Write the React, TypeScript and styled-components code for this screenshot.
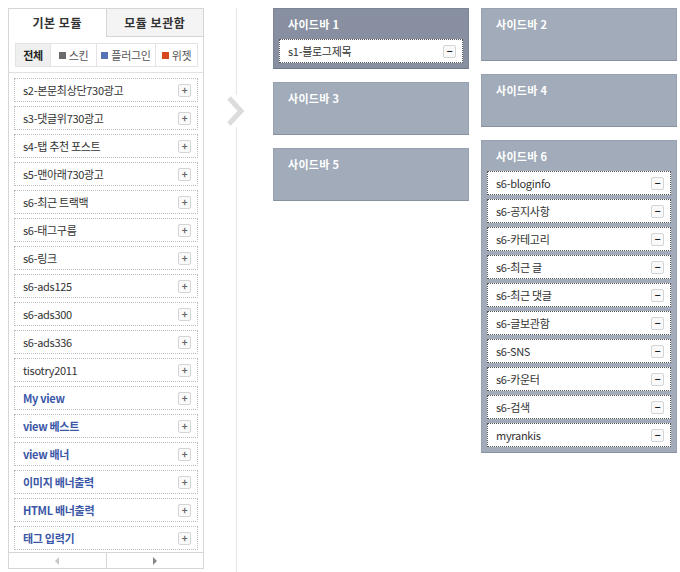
import { FC } from "react";
import styled, { createGlobalStyle } from "styled-components";

const GlobalStyle = createGlobalStyle`
  html, body {
    margin: 0;
    padding: 0;
    background: #fff;
  }
  body {
    font-family: "Noto Sans CJK KR", "Noto Sans", "Liberation Sans", sans-serif;
    font-size: 11px;
    color: #333;
  }
  * {
    box-sizing: border-box;
  }
`;

const Page = styled.div`
  display: flex;
  width: 680px;
  height: 572px;
  padding: 8px 0 0 8px;
  overflow: hidden;
`;

/* ---------- left: module list ---------- */

const ModulePanel = styled.div`
  display: flex;
  flex-direction: column;
  width: 196px;
  height: 561px;
  border: 1px solid #d6d6d6;
  background: #fff;
`;

const Tabs = styled.div`
  display: flex;
  height: 28px;
`;

const Tab = styled.div<{ active?: boolean }>`
  flex: 1;
  display: flex;
  justify-content: center;
  align-items: center;
  font-size: 12px;
  font-weight: 700;
  color: #333;
  letter-spacing: 0.5px;
  background: ${({ active }) => (active ? "#fff" : "#f4f4f4")};
  border-bottom: 1px solid ${({ active }) => (active ? "transparent" : "#d6d6d6")};
  border-left: ${({ active }) => (active ? "none" : "1px solid #d6d6d6")};
`;

const FilterWrap = styled.div`
  padding: 6px 5px 5px 6px;
  border-bottom: 1px solid #e2e2e2;
`;

const Filter = styled.div`
  display: flex;
  height: 24px;
  border: 1px solid #e3e3e3;
`;

const FilterItem = styled.div<{ active?: boolean; w: number }>`
  display: flex;
  align-items: center;
  justify-content: center;
  gap: 3px;
  width: ${({ w }) => w}px;
  flex: ${({ w }) => (w ? "none" : "1")};
  font-size: 11px;
  letter-spacing: -0.3px;
  font-weight: ${({ active }) => (active ? 700 : 400)};
  color: ${({ active }) => (active ? "#222" : "#555")};
  background: ${({ active }) => (active ? "#efefef" : "#fff")};
  border-left: 1px solid #e3e3e3;

  &:first-child {
    border-left: none;
  }
`;

const Swatch = styled.span<{ color: string }>`
  display: inline-block;
  width: 7px;
  height: 7px;
  background: ${({ color }) => color};
`;

const ModuleList = styled.div`
  flex: 1;
  display: flex;
  flex-direction: column;
  gap: 4px;
  padding: 5px 5px 0 5px;
  overflow: hidden;
`;

const ModuleItem = styled.div<{ blue?: boolean }>`
  flex: none;
  display: flex;
  align-items: center;
  justify-content: space-between;
  height: 24px;
  padding: 0 6px 0 8px;
  border: 1px dotted #bdbdbd;
  background: #fff;
  font-size: 11px;
  font-weight: ${({ blue }) => (blue ? 700 : 400)};
  color: ${({ blue }) => (blue ? "#3a56a6" : "#333")};
  letter-spacing: -0.3px;
`;

const SmallButton = styled.span<{ dark?: boolean }>`
  display: flex;
  align-items: center;
  justify-content: center;
  width: 13px;
  height: 13px;
  border: 1px solid #d4d4d4;
  border-radius: 2px;
  background: #fafafa;
  color: ${({ dark }) => (dark ? "#222" : "#666")};
  font-size: 10px;
  font-weight: 700;
  line-height: 1;
`;

const Pager = styled.div`
  display: flex;
  height: 16px;
  margin-top: 2px;
  border-top: 1px solid #d6d6d6;
`;

const PagerButton = styled.div`
  flex: 1;
  display: flex;
  align-items: center;
  justify-content: center;
  border-left: 1px solid #d6d6d6;

  &:first-child {
    border-left: none;
  }
`;

/* ---------- middle divider ---------- */

const Divider = styled.div`
  position: relative;
  width: 69px;
  flex: none;

  &::before {
    content: "";
    position: absolute;
    left: 32px;
    top: 0;
    bottom: 0;
    width: 1px;
    background: #e6e6e6;
  }
`;

const Chevron = styled.svg`
  position: absolute;
  left: 21px;
  top: 87px;
`;

/* ---------- right: sidebars ---------- */

const Sidebars = styled.div`
  display: grid;
  grid-template-columns: 196px 196px;
  column-gap: 12px;
  align-items: start;
`;

const Column = styled.div`
  display: flex;
  flex-direction: column;
  gap: 13px;
`;

const SidebarBox = styled.div<{ active?: boolean }>`
  display: flex;
  flex-direction: column;
  gap: 4px;
  min-height: 53px;
  padding: 0 5px 5px 5px;
  background: ${({ active }) => (active ? "#878fa0" : "#a1abba")};
  border: 1px solid ${({ active }) => (active ? "#7c8596" : "#97a1b1")};
  border-bottom-color: ${({ active }) => (active ? "#6f7889" : "#88919f")};
`;

const SidebarTitle = styled.div`
  height: 26px;
  display: flex;
  align-items: center;
  padding: 4px 0 0 9px;
  font-size: 11px;
  font-weight: 700;
  color: #fff;
  letter-spacing: 0.3px;
`;

const SidebarItem = styled.div`
  display: flex;
  align-items: center;
  justify-content: space-between;
  height: 24px;
  padding: 0 6px 0 8px;
  background: #fff;
  border: 1px dotted #555;
  font-size: 11px;
  color: #333;
  letter-spacing: -0.3px;
`;

interface ModuleDef {
  name: string;
  blue?: boolean;
}

const modules: ModuleDef[] = [
  { name: "s2-본문최상단730광고" },
  { name: "s3-댓글위730광고" },
  { name: "s4-탭 추천 포스트" },
  { name: "s5-맨아래730광고" },
  { name: "s6-최근 트랙백" },
  { name: "s6-태그구름" },
  { name: "s6-링크" },
  { name: "s6-ads125" },
  { name: "s6-ads300" },
  { name: "s6-ads336" },
  { name: "tisotry2011" },
  { name: "My view", blue: true },
  { name: "view 베스트", blue: true },
  { name: "view 배너", blue: true },
  { name: "이미지 배너출력", blue: true },
  { name: "HTML 배너출력", blue: true },
  { name: "태그 입력기", blue: true },
];

const sidebar6 = [
  "s6-bloginfo",
  "s6-공지사항",
  "s6-카테고리",
  "s6-최근 글",
  "s6-최근 댓글",
  "s6-글보관함",
  "s6-SNS",
  "s6-카운터",
  "s6-검색",
  "myrankis",
];

const Sidebar: FC<{ title: string; items?: string[]; active?: boolean }> = ({
  title,
  items = [],
  active,
}) => (
  <SidebarBox active={active}>
    <SidebarTitle>{title}</SidebarTitle>
    {items.map((item) => (
      <SidebarItem key={item}>
        <span>{item}</span>
        <SmallButton dark>−</SmallButton>
      </SidebarItem>
    ))}
  </SidebarBox>
);

export default function App() {
  return (
    <>
      <GlobalStyle />
      <Page>
        <ModulePanel>
          <Tabs>
            <Tab active>기본 모듈</Tab>
            <Tab>모듈 보관함</Tab>
          </Tabs>
          <FilterWrap>
            <Filter>
              <FilterItem active w={34}>
                전체
              </FilterItem>
              <FilterItem w={46}>
                <Swatch color="#6b6b6b" />
                스킨
              </FilterItem>
              <FilterItem w={59}>
                <Swatch color="#5872b8" />
                플러그인
              </FilterItem>
              <FilterItem w={0}>
                <Swatch color="#d9471f" />
                위젯
              </FilterItem>
            </Filter>
          </FilterWrap>
          <ModuleList>
            {modules.map((m) => (
              <ModuleItem key={m.name} blue={m.blue}>
                <span>{m.name}</span>
                <SmallButton>+</SmallButton>
              </ModuleItem>
            ))}
          </ModuleList>
          <Pager>
            <PagerButton>
              <svg width="5" height="8" viewBox="0 0 5 8">
                <path d="M4 0 L0 4 L4 8 Z" fill="#c8c8c8" />
              </svg>
            </PagerButton>
            <PagerButton>
              <svg width="5" height="8" viewBox="0 0 5 8">
                <path d="M1 0 L5 4 L1 8 Z" fill="#888" />
              </svg>
            </PagerButton>
          </Pager>
        </ModulePanel>

        <Divider>
          <Chevron width="22" height="32" viewBox="0 0 22 32">
            <rect x="0" y="0" width="22" height="32" fill="#fff" />
            <path
              d="M4 3 L16 16 L4 29"
              fill="none"
              stroke="#dcdcdc"
              strokeWidth="5"
              strokeLinejoin="miter"
            />
          </Chevron>
        </Divider>

        <Sidebars>
          <Column>
            <Sidebar title="사이드바 1" items={["s1-블로그제목"]} active />
            <Sidebar title="사이드바 3" />
            <Sidebar title="사이드바 5" />
          </Column>
          <Column>
            <Sidebar title="사이드바 2" />
            <Sidebar title="사이드바 4" />
            <Sidebar title="사이드바 6" items={sidebar6} />
          </Column>
        </Sidebars>
      </Page>
    </>
  );
}
